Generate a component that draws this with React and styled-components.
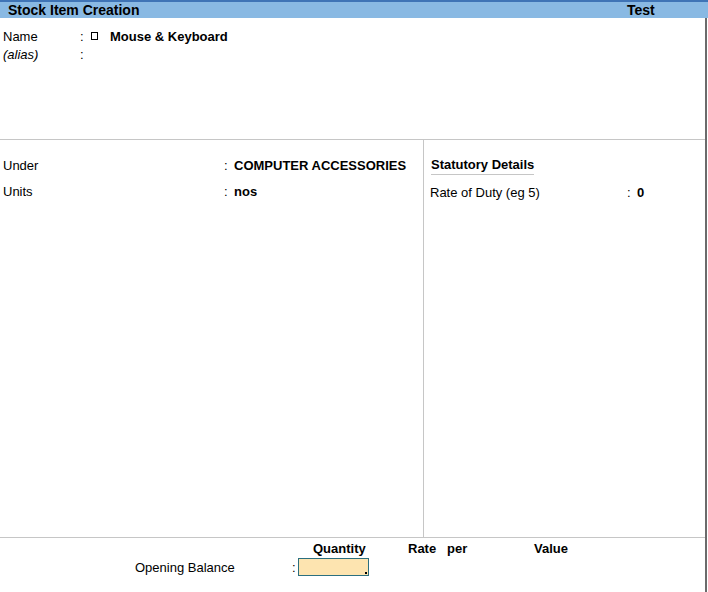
import React from "react";
import styled, { createGlobalStyle } from "styled-components";

const Global = createGlobalStyle`
  html, body { margin: 0; padding: 0; background: #fff; }
  body { font-family: "Liberation Sans", Arial, sans-serif; font-size: 13px; color: #000; }
  #root { width: 708px; height: 592px; overflow: hidden; }
`;

const Page = styled.div`
  width: 708px;
  height: 592px;
  display: flex;
  flex-direction: column;
  background: #fff;
`;

const TitleBar = styled.div`
  height: 16px;
  border-top: 2px solid #3f74b6;
  background: #89b9e3;
  display: flex;
  align-items: center;
  font-weight: bold;
  font-size: 14px;
  line-height: 16px;
`;

const TitleText = styled.span`
  padding-left: 8px;
  width: 619px;
`;

const Body = styled.div`
  flex: 1;
  width: 705px;
  border-right: 2px solid #6b6b6b;
  display: flex;
  flex-direction: column;
`;

const TopSection = styled.div`
  height: 121px;
  padding-top: 9px;
  box-sizing: border-box;
  display: flex;
  flex-direction: column;
`;

const Row = styled.div`
  display: flex;
  align-items: center;
  height: ${(p) => p.$h || 18}px;
  margin-bottom: ${(p) => p.$gap || 0}px;
  white-space: nowrap;
`;

const Label = styled.span`
  width: ${(p) => p.$w}px;
  padding-left: ${(p) => p.$pl ?? 3}px;
  box-sizing: border-box;
  font-style: ${(p) => (p.$italic ? "italic" : "normal")};
  flex: none;
`;

const Colon = styled.span`
  width: ${(p) => p.$w || 10}px;
  flex: none;
`;

const Value = styled.span`
  font-weight: bold;
`;

const Tofu = styled.span`
  display: inline-block;
  width: 7px;
  height: 8px;
  border: 1px solid #000;
  margin-left: 1px;
  margin-right: 12px;
  box-sizing: border-box;
  flex: none;
`;

const Middle = styled.div`
  height: 399px;
  border-top: 1px solid #c6c6c6;
  border-bottom: 1px solid #c6c6c6;
  display: flex;
  box-sizing: border-box;
`;

const LeftCol = styled.div`
  width: 424px;
  border-right: 1px solid #c6c6c6;
  box-sizing: border-box;
  padding-top: 16px;
`;

const RightCol = styled.div`
  flex: 1;
  padding-top: 16px;
`;

const SectionHead = styled.div`
  margin-left: 7px;
  display: inline-block;
  font-weight: bold;
  height: 18px;
  line-height: 18px;
  border-bottom: 1px solid #c6c6c6;
  margin-bottom: 8px;
`;

const Bottom = styled.div`
  flex: 1;
  padding-top: 2px;
  display: flex;
  flex-direction: column;
`;

const HeadCell = styled.span`
  width: ${(p) => p.$w}px;
  flex: none;
  font-weight: bold;
`;

const OpenBox = styled.div`
  width: 71px;
  height: 18px;
  box-sizing: border-box;
  border: 1px solid #2b6f7f;
  background: #fde4b0;
  position: relative;
  &::after {
    content: "";
    position: absolute;
    right: 1px;
    bottom: 1px;
    width: 2px;
    height: 2px;
    background: #000;
  }
`;

export default function App() {
  return (
    <>
      <Global />
      <Page>
        <TitleBar>
          <TitleText>Stock Item Creation</TitleText>
          <span>Test</span>
        </TitleBar>
        <Body>
          <TopSection>
            <Row>
              <Label $w={80}>Name</Label>
              <Colon>:</Colon>
              <Tofu />
              <Value>Mouse &amp; Keyboard</Value>
            </Row>
            <Row>
              <Label $w={80} $italic>(alias)</Label>
              <Colon>:</Colon>
            </Row>
          </TopSection>
          <Middle>
            <LeftCol>
              <Row $gap={8}>
                <Label $w={224}>Under</Label>
                <Colon>:</Colon>
                <Value>COMPUTER ACCESSORIES</Value>
              </Row>
              <Row>
                <Label $w={224}>Units</Label>
                <Colon>:</Colon>
                <Value>nos</Value>
              </Row>
            </LeftCol>
            <RightCol>
              <SectionHead>Statutory Details</SectionHead>
              <Row>
                <Label $w={203} $pl={6}>Rate of Duty (eg 5)</Label>
                <Colon>:</Colon>
                <Value>0</Value>
              </Row>
            </RightCol>
          </Middle>
          <Bottom>
            <Row $h={16} $gap={1}>
              <Label $w={313} $pl={0} />
              <HeadCell $w={95}>Quantity</HeadCell>
              <HeadCell $w={39}>Rate</HeadCell>
              <HeadCell $w={87}>per</HeadCell>
              <HeadCell $w={60}>Value</HeadCell>
            </Row>
            <Row $h={20}>
              <Label $w={292} $pl={135}>Opening Balance</Label>
              <Colon $w={6}>:</Colon>
              <OpenBox />
            </Row>
          </Bottom>
        </Body>
      </Page>
    </>
  );
}
